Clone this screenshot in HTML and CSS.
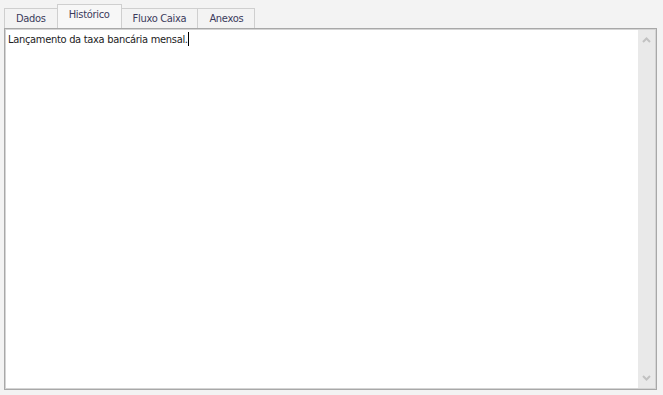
FILE: index.html
```html
<!DOCTYPE html>
<html lang="pt-BR">
<head>
  <meta charset="UTF-8" />
  <title>Histórico</title>
  <link rel="stylesheet" href="styles.css">
</head>
<body>
  <div class="tabs">
    <div class="tab">Dados</div>
    <div class="tab active">Histórico</div>
    <div class="tab">Fluxo Caixa</div>
    <div class="tab">Anexos</div>
  </div>
  <div class="panel">
    <div class="memo">Lançamento da taxa bancária mensal.<span class="caret"></span></div>
    <div class="scrollbar">
      <svg width="9" height="6" viewBox="0 0 9 6"><path d="M1 5 L4.5 1.5 L8 5" fill="none" stroke="#c2c2c2" stroke-width="2"/></svg>
      <svg width="9" height="6" viewBox="0 0 9 6"><path d="M1 1 L4.5 4.5 L8 1" fill="none" stroke="#c2c2c2" stroke-width="2"/></svg>
    </div>
  </div>
</body>
</html>
```

FILE: styles.css
```css
body {
  margin: 0;
  padding: 4px 6px 5px 4px;
  background: #f3f3f3;
  font-family: 'DejaVu Sans Condensed', 'DejaVu Sans', sans-serif;
  font-size: 11px;
  letter-spacing: -0.3px;
  color: #333;
  height: 395px;
  box-sizing: border-box;
  display: flex;
  flex-direction: column;
}

/* abas */
.tabs {
  display: flex;
  align-items: flex-end;
  height: 24px;
}

.tab {
  height: 20px;
  line-height: 19px;
  padding: 0 11px;
  border: 1px solid #cfcfcf;
  border-bottom: none;
  background: #f3f3f3;
  color: #3b3b5c;
  box-sizing: border-box;
  margin-right: -1px;
}

.tab.active {
  height: 24px;
  line-height: 20px;
  background: #f7f7f7;
  position: relative;
  z-index: 1;
}

/* área de texto */
.panel {
  flex: 1;
  display: flex;
  border: 1px solid #a8a8a8;
  box-shadow: inset 0 0 0 1px #d4d4d4;
  background: #fff;
  padding: 1px;
}

.memo {
  flex: 1;
  padding: 2px 2px;
  color: #222;
}

.caret {
  display: inline-block;
  width: 1px;
  height: 14px;
  background: #000;
  vertical-align: -3px;
}

.scrollbar {
  width: 17px;
  background: #e9e9e9;
  display: flex;
  flex-direction: column;
  justify-content: space-between;
  align-items: center;
  padding: 7px 0;
}
```
